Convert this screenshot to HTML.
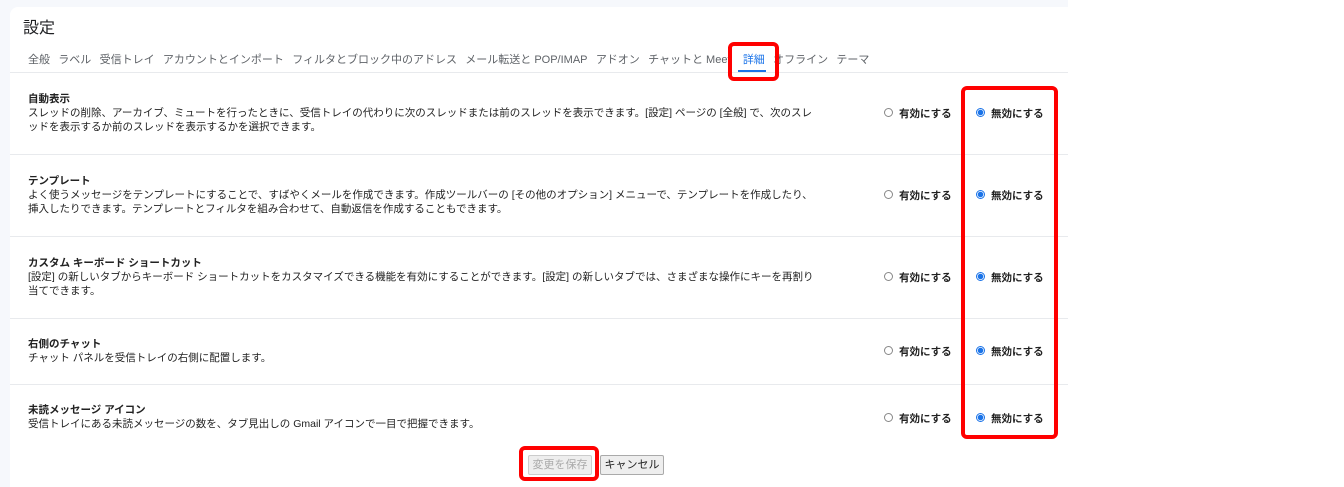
<!DOCTYPE html>
<html><head><meta charset="utf-8"><style>
*{margin:0;padding:0;box-sizing:border-box}
body{width:1344px;height:487px;background:#fff;font-family:"Liberation Sans","Noto Sans CJK JP",sans-serif;position:relative;overflow:hidden;color:#222}
.bgl{position:absolute;left:0;top:0;width:1068px;height:487px;background:#f6f8fc}
.card{position:absolute;left:10px;top:7px;width:1058px;height:480px;background:#fff;border-radius:8px 0 0 0}
.t{position:absolute;left:23px;top:14px;font-size:16px;color:#202124}
.tabs{position:absolute;left:28px;top:51px;font-size:11px;color:#5f6368;white-space:nowrap}
.tabs span{margin-right:8.3px}
.sel{color:#1a73e8}
.ul{position:absolute;left:738px;top:70px;width:28px;height:2px;background:#1a73e8}
.hl{position:absolute;left:10px;width:1058px;height:1px;background:#e8eaed}
.sec{position:absolute;left:28px;font-size:10.5px;line-height:14px;color:#222;width:794px}
.sec b{display:block;font-weight:bold}
.r{position:absolute;font-size:10.5px;font-weight:bold;color:#222}
.rb{position:absolute;width:9px;height:9px;border-radius:50%;border:1px solid #888;background:#fff}
.rb.on{border-color:#1a73e8;background:radial-gradient(circle,#1a73e8 2.5px,#fff 3px)}
.red{position:absolute;border:4px solid #f00;border-radius:6px}
.btn{position:absolute;top:455px;height:20px;font-size:11px;border:1px solid #aaa;background:#eee;text-align:center;line-height:18px;border-radius:2px}
</style></head><body>
<div class="bgl"></div><div class="card"></div>
<div class="t">設定</div>
<div class="tabs"><span>全般</span><span>ラベル</span><span>受信トレイ</span><span>アカウントとインポート</span><span>フィルタとブロック中のアドレス</span><span>メール転送と POP/IMAP</span><span>アドオン</span><span>チャットと Meet</span><span class="sel" style="margin-left:4px">詳細</span><span>オフライン</span><span>テーマ</span></div>
<div class="ul"></div>
<div class="hl" style="top:72px"></div>
<div class="hl" style="top:154px"></div>
<div class="hl" style="top:236px"></div>
<div class="hl" style="top:318px"></div>
<div class="hl" style="top:384px"></div>

<div class="sec" style="top:92px"><b>自動表示</b>スレッドの削除、アーカイブ、ミュートを行ったときに、受信トレイの代わりに次のスレッドまたは前のスレッドを表示できます。[設定] ページの [全般] で、次のスレッドを表示するか前のスレッドを表示するかを選択できます。</div>
<div class="sec" style="top:174px"><b>テンプレート</b>よく使うメッセージをテンプレートにすることで、すばやくメールを作成できます。作成ツールバーの [その他のオプション] メニューで、テンプレートを作成したり、挿入したりできます。テンプレートとフィルタを組み合わせて、自動返信を作成することもできます。</div>
<div class="sec" style="top:256px"><b>カスタム キーボード ショートカット</b>[設定] の新しいタブからキーボード ショートカットをカスタマイズできる機能を有効にすることができます。[設定] の新しいタブでは、さまざまな操作にキーを再割り当てできます。</div>
<div class="sec" style="top:337px"><b>右側のチャット</b>チャット パネルを受信トレイの右側に配置します。</div>
<div class="sec" style="top:403px"><b>未読メッセージ アイコン</b>受信トレイにある未読メッセージの数を、タブ見出しの Gmail アイコンで一目で把握できます。</div>

<div class="rb" style="left:884px;top:108px"></div><div class="r" style="left:899px;top:106px">有効にする</div>
<div class="rb on" style="left:976px;top:108px"></div><div class="r" style="left:991px;top:106px">無効にする</div>
<div class="rb" style="left:884px;top:190px"></div><div class="r" style="left:899px;top:188px">有効にする</div>
<div class="rb on" style="left:976px;top:190px"></div><div class="r" style="left:991px;top:188px">無効にする</div>
<div class="rb" style="left:884px;top:272px"></div><div class="r" style="left:899px;top:270px">有効にする</div>
<div class="rb on" style="left:976px;top:272px"></div><div class="r" style="left:991px;top:270px">無効にする</div>
<div class="rb" style="left:884px;top:346px"></div><div class="r" style="left:899px;top:344px">有効にする</div>
<div class="rb on" style="left:976px;top:346px"></div><div class="r" style="left:991px;top:344px">無効にする</div>
<div class="rb" style="left:884px;top:413px"></div><div class="r" style="left:899px;top:411px">有効にする</div>
<div class="rb on" style="left:976px;top:413px"></div><div class="r" style="left:991px;top:411px">無効にする</div>

<div class="btn" style="left:528px;width:64px;color:#aaa;border-color:#ccc">変更を保存</div>
<div class="btn" style="left:600px;width:64px;color:#222">キャンセル</div>

<div class="red" style="left:728px;top:42px;width:51px;height:39px"></div>
<div class="red" style="left:961px;top:86px;width:97px;height:353px"></div>
<div class="red" style="left:519px;top:446px;width:80px;height:35px"></div>
</body></html>
